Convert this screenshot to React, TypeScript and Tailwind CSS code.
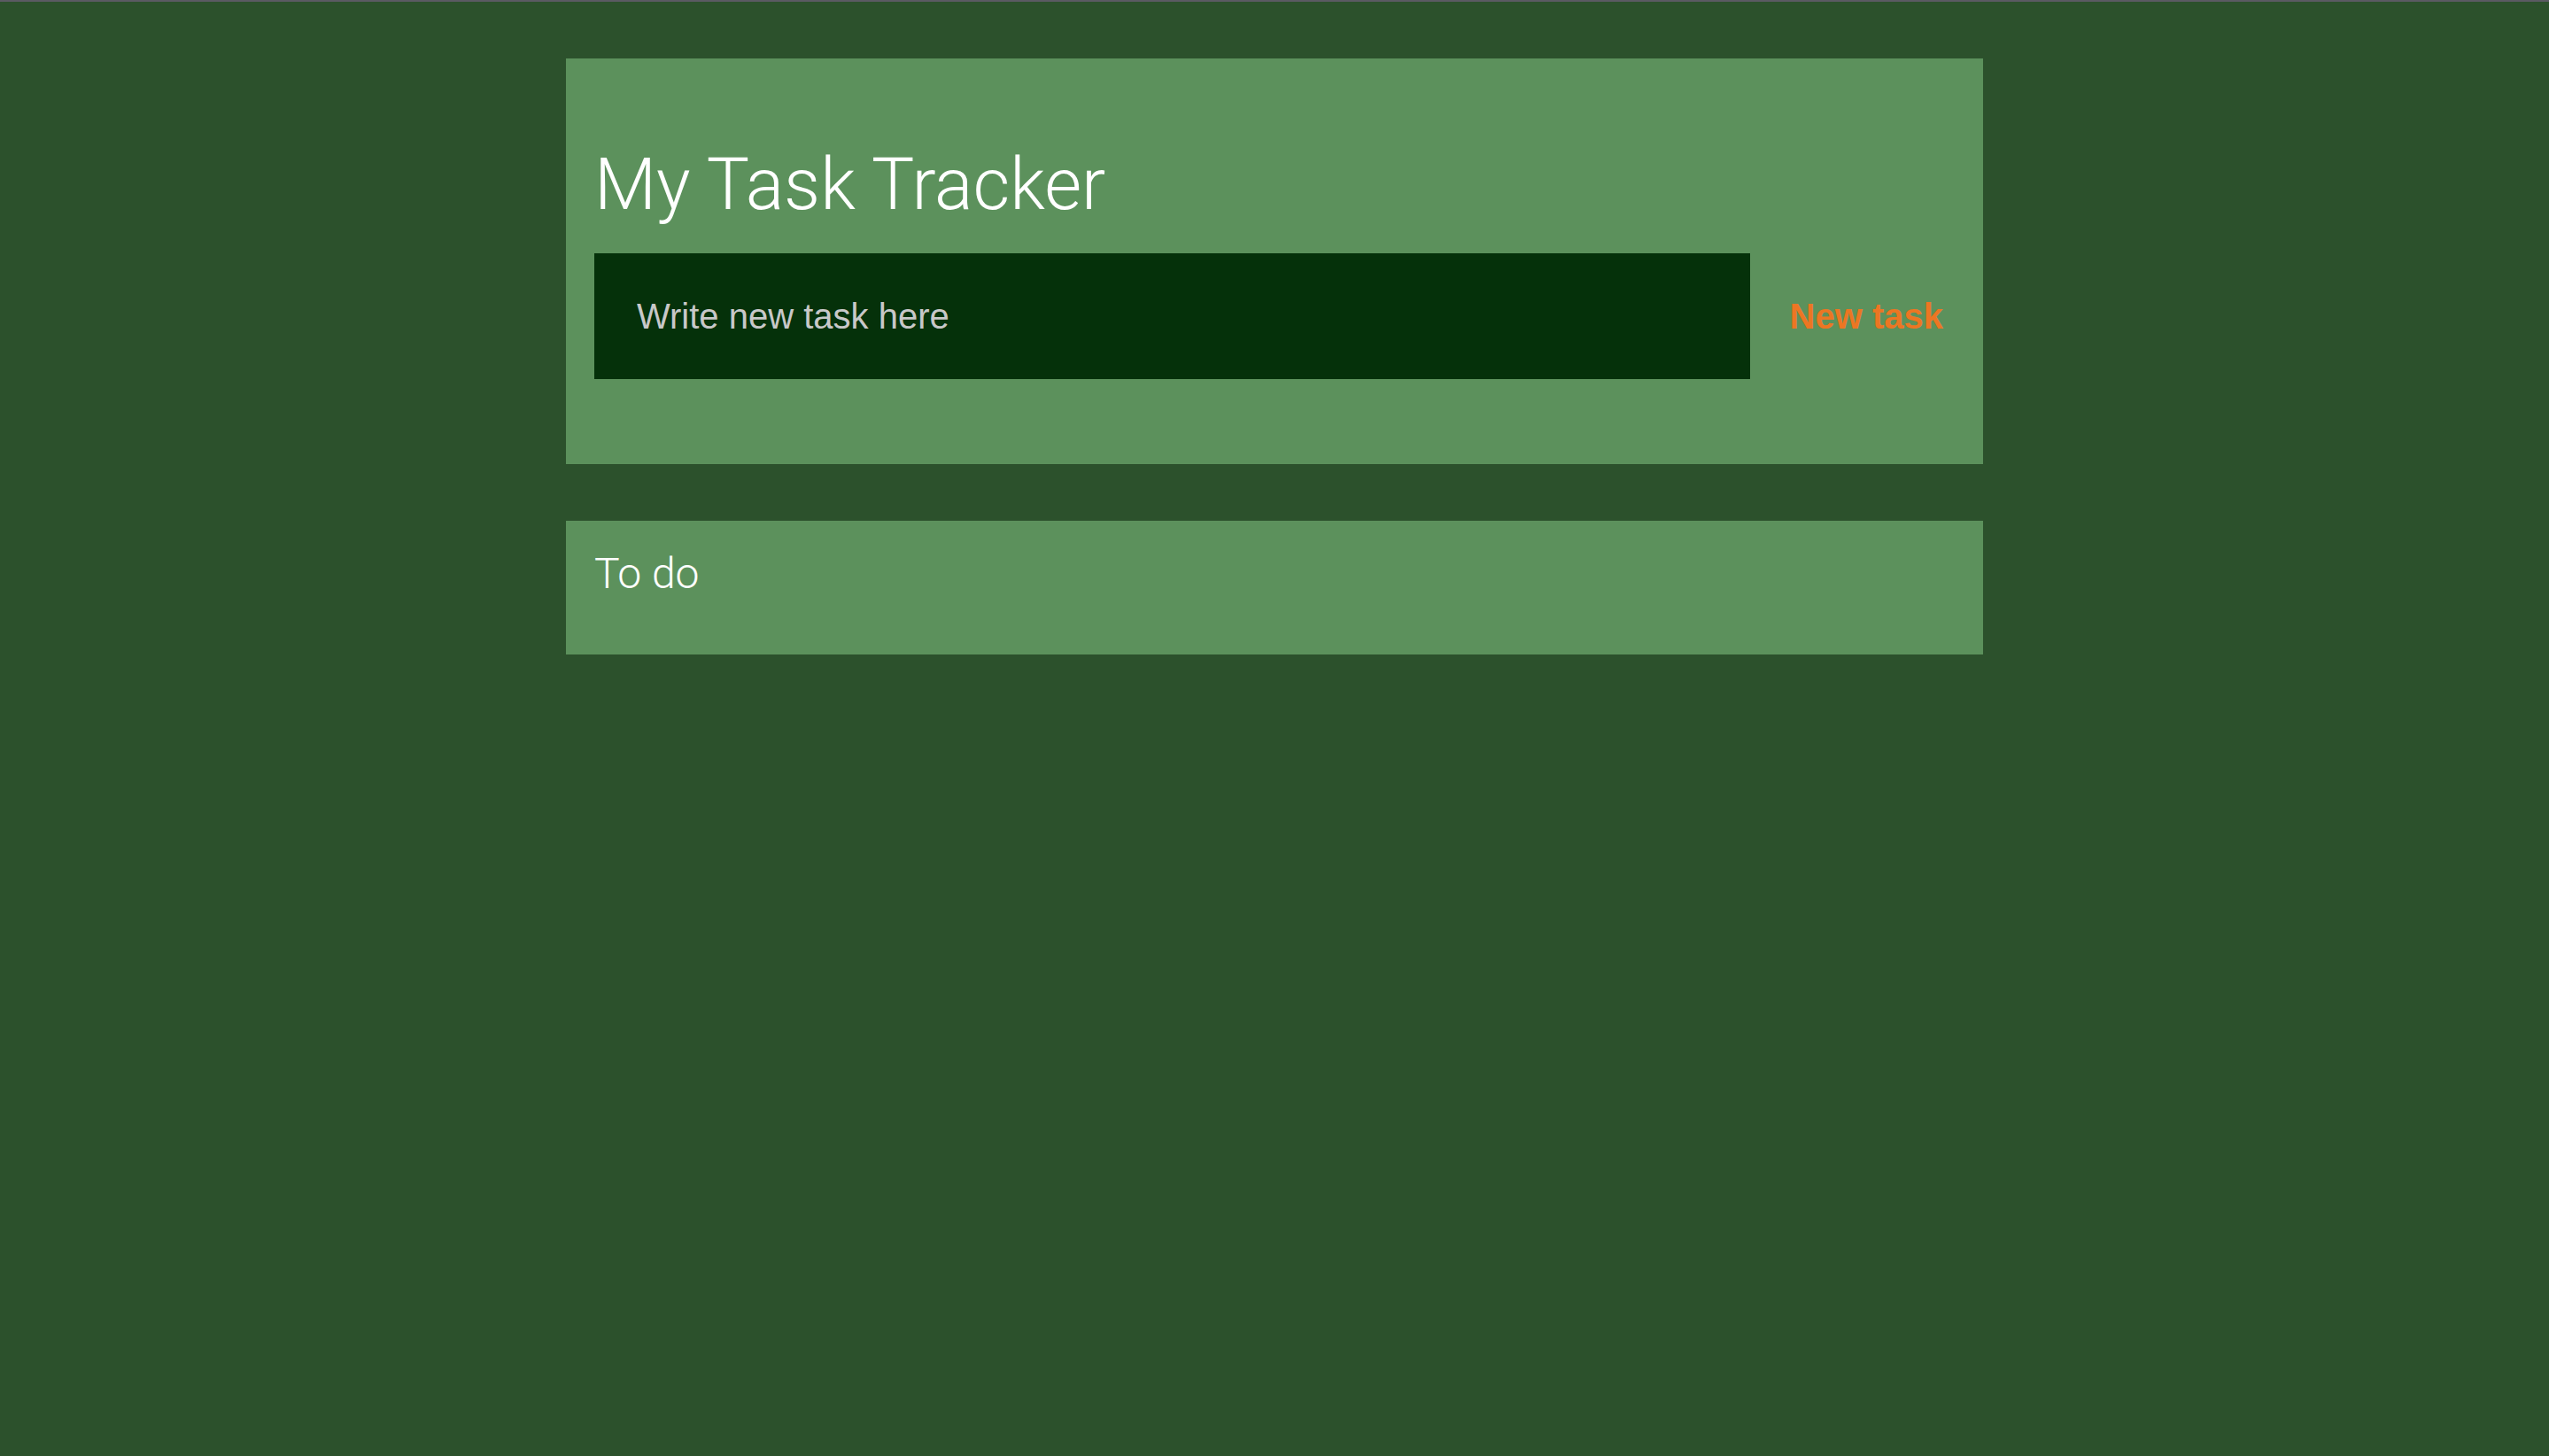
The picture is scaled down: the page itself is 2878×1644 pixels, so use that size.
import React from "react";

export default function App() {
  return (
    <div className="min-h-screen w-full bg-[#2c512c] flex flex-col">
      <div className="h-[2px] w-full bg-[#5b5a63]" />
      <div className="w-[1600px] mx-auto mt-[64px] flex flex-col gap-[64px]">
        <div className="bg-[#5c915c] px-[32px] pt-[102px] pb-[96px] flex flex-col">
          <h1 className="text-white text-[81px] leading-none font-light mb-[37px] [font-family:Roboto,'Liberation_Sans',sans-serif]">
            My Task Tracker
          </h1>
          <div className="flex items-center h-[142px]">
            <input
              type="text"
              placeholder="Write new task here"
              className="flex-1 h-full bg-[#05310a] pl-[48px] pr-4 text-[40px] text-white placeholder:text-[#c8c8c8] outline-none border-0 [font-family:'Liberation_Sans',Arial,sans-serif]"
            />
            <button className="pl-[45px] pr-[13px] text-[40px] font-bold text-[#ec7623] bg-transparent [font-family:'Liberation_Sans',Arial,sans-serif]">
              New task
            </button>
          </div>
        </div>
        <div className="bg-[#5c915c] px-[32px] pt-[36px] pb-[67px]">
          <h2 className="text-white text-[48px] leading-none font-light [font-family:Roboto,'Liberation_Sans',sans-serif]">
            To do
          </h2>
        </div>
      </div>
    </div>
  );
}
